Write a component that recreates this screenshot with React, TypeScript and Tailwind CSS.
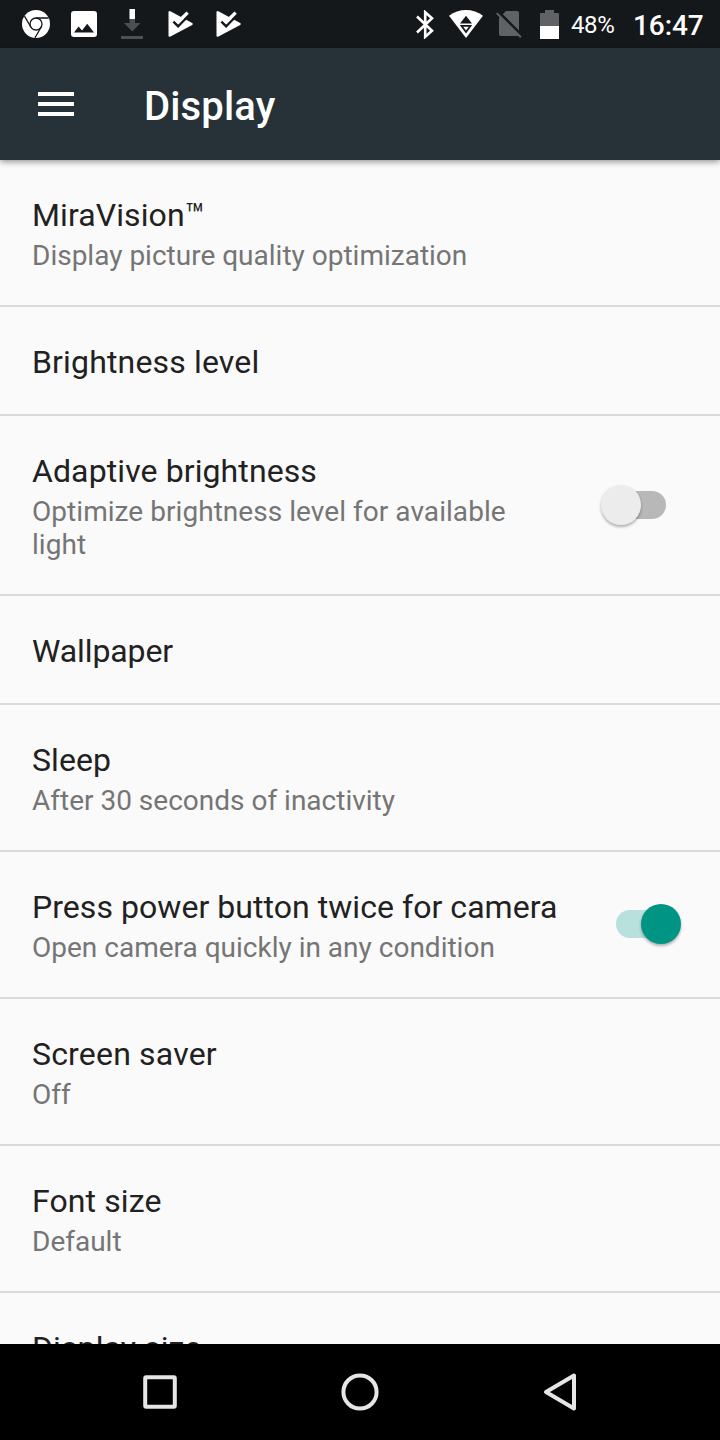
import { clsx } from "clsx";

type SettingItem = {
  title: string;
  summary?: string;
  checked?: boolean;
  tracking?: string;
};

const settings: SettingItem[] = [
  { title: "MiraVision™", summary: "Display picture quality optimization" },
  { title: "Brightness level", tracking: "tracking-[0.16px]" },
  {
    title: "Adaptive brightness",
    summary: "Optimize brightness level for available light",
    checked: false,
  },
  { title: "Wallpaper", tracking: "tracking-[-0.1px]" },
  { title: "Sleep", summary: "After 30 seconds of inactivity" },
  {
    title: "Press power button twice for camera",
    summary: "Open camera quickly in any condition",
    checked: true,
    tracking: "tracking-[0.05px]",
  },
  { title: "Screen saver", summary: "Off", tracking: "tracking-[0.18px]" },
  { title: "Font size", summary: "Default" },
  { title: "Display size" },
];

const ChromeIcon = () => (
  <svg className="w-7 h-7" viewBox="0 0 28 28">
    <circle cx="14" cy="14" r="14" fill="#fff" />
    <g fill="none" stroke="#14181b" strokeWidth="1.3">
      <circle cx="14" cy="14" r="6" />
      <path d="M14 8H26.6M8.8 17L2.5 6.2M19.2 17L13 27.8" />
    </g>
  </svg>
);

const PictureIcon = () => (
  <svg className="w-[26px] h-[26px]" viewBox="0 0 26 26">
    <rect width="26" height="26" rx="3" fill="#fff" />
    <path d="M3 21.5L7.6 15.6L11 19.6L16.2 12.8L23 21.5Z" fill="#14181b" />
  </svg>
);

const DownloadIcon = () => (
  <svg className="w-[22px] h-[30px]" viewBox="0 0 22 30">
    <path d="M8.5 10H14V14H19.5L11.3 22.5L3 14H8.5Z" fill="#4d5052" />
    <path d="M8.5 0H14V10H8.5Z" fill="#fff" />
    <path d="M0 27H22V30H0Z" fill="#4d5052" />
  </svg>
);

const PlayCheckIcon = () => (
  <svg className="w-[26px] h-7" viewBox="0 0 26 28">
    <path
      d="M2.4 1.2Q.5 .4 .5 2.2V25.2Q.5 27.4 2.5 26.4L24.2 15Q25.6 14 24.2 13Z"
      fill="#fff"
    />
    <path
      d="M5.4 11.6L10.1 16.4L22.2 4"
      fill="none"
      stroke="#14181b"
      strokeWidth="2.4"
    />
    <path d="M9.4 12.8L19.6 2.6" stroke="#fff" strokeWidth="3.4" />
  </svg>
);

const BluetoothIcon = () => (
  <svg className="w-[18px] h-[29px]" viewBox="0 0 18 29">
    <path
      d="M1 6.5L16 20.7L9.2 26.8V2.2L16 8.3L1 22.5"
      fill="none"
      stroke="#fff"
      strokeWidth="2.6"
    />
  </svg>
);

const WifiIcon = () => (
  <svg className="w-[34px] h-7" viewBox="0 0 34 28">
    <path d="M0 5.8C10 -1.9 24 -1.9 34 5.8L17 28Z" fill="#fff" />
    <path d="M17 5.8L23 13.4H11ZM10.8 15H23.2L17 23.6Z" fill="#14181b" />
    <path d="M14.2 16.8H19.8L17 20.6Z" fill="#fff" />
  </svg>
);

const NoSimIcon = () => (
  <svg className="w-[26px] h-7" viewBox="0 0 26 28">
    <path
      d="M10 0H21Q23 0 23 2V23Q23 25 21 25H5Q3 25 3 23V7Z"
      fill="#606365"
    />
    <path d="M1.8 .3L26 24.5" stroke="#14181b" strokeWidth="3" />
    <path d="M.7 2.1L24.9 26.3" stroke="#606365" strokeWidth="2" />
  </svg>
);

const BatteryIcon = () => (
  <svg className="w-[19px] h-[29px]" viewBox="0 0 19 29">
    <path d="M5 0H14V3H18Q19 3 19 4V16H0V4Q0 3 1 3H5Z" fill="#606365" />
    <path d="M0 16H19V29H0Z" fill="#fff" />
  </svg>
);

const StatusBar = () => (
  <div className="flex items-center h-12 shrink-0 bg-[#14181b] text-white pl-[22px] pr-4">
    <ChromeIcon />
    <div className="ml-[21px]">
      <PictureIcon />
    </div>
    <div className="ml-6">
      <DownloadIcon />
    </div>
    <div className="ml-[25px]">
      <PlayCheckIcon />
    </div>
    <div className="ml-[22px]">
      <PlayCheckIcon />
    </div>
    <div className="flex items-center ml-auto">
      <BluetoothIcon />
      <div className="ml-[15px]">
        <WifiIcon />
      </div>
      <div className="ml-[13px] pt-0.5">
        <NoSimIcon />
      </div>
      <div className="ml-[18px]">
        <BatteryIcon />
      </div>
      <span className="w-[44px] ml-3 text-[24px] leading-7 tracking-[-0.4px] pt-0.5">
        48%
      </span>
      <span className="w-[71px] ml-[18px] text-[28px] leading-8 font-medium tracking-[-0.1px] pt-[3px]">
        16:47
      </span>
    </div>
  </div>
);

const Header = () => (
  <header className="relative z-10 flex items-center h-28 shrink-0 bg-[#263238] pl-[38px] shadow-[0_2px_6px_rgba(0,0,0,0.4)]">
    <button type="button" className="flex flex-col gap-1.5" aria-label="Menu">
      <span className="w-9 h-1 bg-white" />
      <span className="w-9 h-1 bg-white" />
      <span className="w-9 h-1 bg-white" />
    </button>
    <h1 className="ml-[70px] pt-1.5 text-[40px] leading-[48px] font-medium tracking-[0.15px] text-white">
      Display
    </h1>
  </header>
);

const Switch = ({ checked }: { checked: boolean }) => (
  <button
    type="button"
    role="switch"
    aria-checked={checked}
    className={clsx(
      "flex items-center w-[50px] h-7 rounded-full shrink-0",
      checked ? "justify-end bg-[#b8e0dc]" : "bg-[#b8b8b8]",
    )}
  >
    <span
      className={clsx(
        "w-10 h-10 rounded-full shrink-0 shadow-[0_2px_3px_rgba(0,0,0,0.3)]",
        checked ? "-mr-[15px] bg-[#009485]" : "-ml-[15px] bg-[#ececec]",
      )}
    />
  </button>
);

const SettingRow = ({
  title,
  summary,
  checked,
  tracking = "tracking-[0.1px]",
}: SettingItem) => (
  <li className="flex items-center shrink-0 border-b-2 border-[#dadada] py-8 pl-8 pr-[54px]">
    <div className="w-[530px]">
      <div
        className={clsx(
          "pt-1 pb-px text-[32px] leading-[38px] text-[#212121] whitespace-nowrap",
          tracking,
        )}
      >
        {title}
      </div>
      {summary && (
        <div
          className={clsx(
            "pt-1 pb-px text-[28px] leading-[33px] text-[#757575]",
            checked === false && "w-[500px] tracking-[0.05px]",
          )}
        >
          {summary}
        </div>
      )}
    </div>
    {checked !== undefined && (
      <div className={clsx("ml-auto", checked && "pb-0.5")}>
        <Switch checked={checked} />
      </div>
    )}
  </li>
);

const NavBar = () => (
  <nav className="flex items-center justify-between h-24 shrink-0 bg-black px-[140px]">
    <svg className="w-10 h-10" viewBox="0 0 40 40">
      <rect
        x="5.2"
        y="5.2"
        width="29.6"
        height="29.6"
        rx="1"
        fill="none"
        stroke="#e6e6e6"
        strokeWidth="4"
      />
    </svg>
    <svg className="w-10 h-10" viewBox="0 0 40 40">
      <circle cx="20" cy="20" r="16.6" fill="none" stroke="#e6e6e6" strokeWidth="4" />
    </svg>
    <svg className="w-10 h-10" viewBox="0 0 40 40">
      <path
        d="M34 3.5V36.5L6 20Z"
        fill="none"
        stroke="#e6e6e6"
        strokeWidth="4"
        strokeLinejoin="round"
      />
    </svg>
  </nav>
);

export default function App() {
  return (
    <div className="flex flex-col w-[720px] h-[1440px] overflow-hidden bg-[#fafafa] font-[Roboto,sans-serif]">
      <StatusBar />
      <Header />
      <ul className="flex flex-col flex-1 min-h-0 overflow-hidden">
        {settings.map((item) => (
          <SettingRow key={item.title} {...item} />
        ))}
      </ul>
      <NavBar />
    </div>
  );
}
